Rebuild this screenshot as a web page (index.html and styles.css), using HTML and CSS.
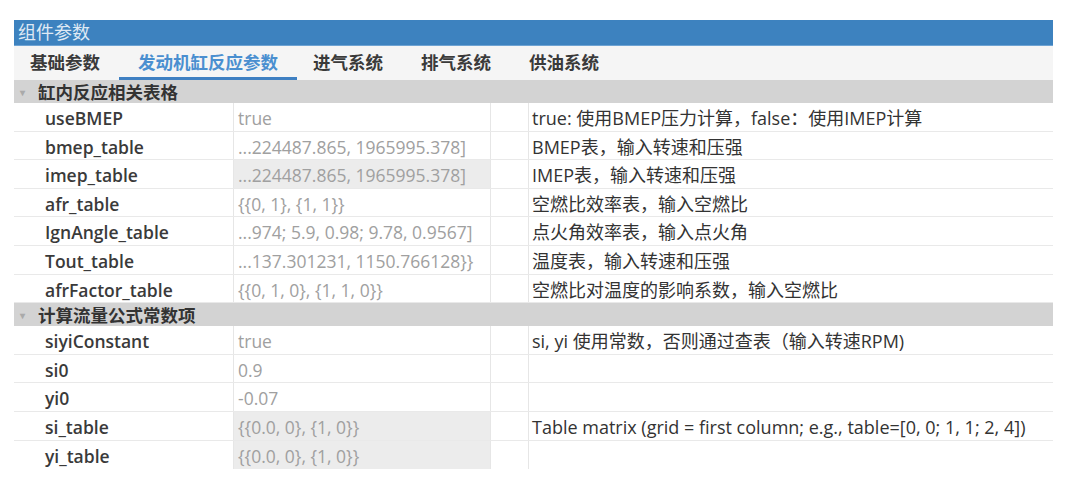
FILE: index.html
```html
<!doctype html>
<html>
	<head>
		<title>组件参数</title>
		<meta charset="utf-8"/>
		<link rel="stylesheet" href="styles.css">
	</head>
	<body>
		<div class="panel">
			<div class="titleBar">组件参数</div>
			<div class="tabs">
				<div class="tab">基础参数</div>
				<div class="tab active">发动机缸反应参数</div>
				<div class="tab">进气系统</div>
				<div class="tab">排气系统</div>
				<div class="tab">供油系统</div>
			</div>

			<div class="group"><span class="arrow">&#9662;</span>缸内反应相关表格</div>
			<div class="row"><div class="name">useBMEP</div><div class="value">true</div><div class="gap"></div><div class="desc">true: 使用BMEP压力计算，false：使用IMEP计算</div></div>
			<div class="row"><div class="name">bmep_table</div><div class="value">...224487.865, 1965995.378]</div><div class="gap"></div><div class="desc">BMEP表，输入转速和压强</div></div>
			<div class="row"><div class="name">imep_table</div><div class="value shade">...224487.865, 1965995.378]</div><div class="gap"></div><div class="desc">IMEP表，输入转速和压强</div></div>
			<div class="row"><div class="name">afr_table</div><div class="value">{{0, 1}, {1, 1}}</div><div class="gap"></div><div class="desc">空燃比效率表，输入空燃比</div></div>
			<div class="row"><div class="name">IgnAngle_table</div><div class="value">...974; 5.9, 0.98; 9.78, 0.9567]</div><div class="gap"></div><div class="desc">点火角效率表，输入点火角</div></div>
			<div class="row"><div class="name">Tout_table</div><div class="value">...137.301231, 1150.766128}}</div><div class="gap"></div><div class="desc">温度表，输入转速和压强</div></div>
			<div class="row"><div class="name">afrFactor_table</div><div class="value">{{0, 1, 0}, {1, 1, 0}}</div><div class="gap"></div><div class="desc">空燃比对温度的影响系数，输入空燃比</div></div>

			<div class="group"><span class="arrow">&#9662;</span>计算流量公式常数项</div>
			<div class="row"><div class="name">siyiConstant</div><div class="value">true</div><div class="gap"></div><div class="desc">si, yi 使用常数，否则通过查表（输入转速RPM)</div></div>
			<div class="row"><div class="name">si0</div><div class="value">0.9</div><div class="gap"></div><div class="desc"></div></div>
			<div class="row"><div class="name">yi0</div><div class="value">-0.07</div><div class="gap"></div><div class="desc"></div></div>
			<div class="row"><div class="name">si_table</div><div class="value shade">{{0.0, 0}, {1, 0}}</div><div class="gap"></div><div class="desc">Table matrix (grid = first column; e.g., table=[0, 0; 1, 1; 2, 4])</div></div>
			<div class="row last"><div class="name">yi_table</div><div class="value shade">{{0.0, 0}, {1, 0}}</div><div class="gap"></div><div class="desc"></div></div>
		</div>
	</body>
</html>
```

FILE: styles.css
```css
*{
	padding:0;margin:0;
	box-sizing:border-box;
}

body{
	background:#fff;
	font-family:"Open Sans","Noto Sans CJK SC",sans-serif;
	font-size:17px;
	color:#333;
}

.panel{
	width:1039px;
	margin:20px 0 0 14px;
}

.titleBar{
	height:26px;
	background-color:#3d82bf;
	border-bottom:1px solid #6ea3d3;
	color:#dfe9f4;
	font-size:18px;
	line-height:25px;
	padding-left:4px;
}

.tabs{
	height:34px;
	background-color:#f5f5f5;
	display:flex;
	padding-left:2px;
}

.tab{
	padding:0 19px;
	line-height:32px;
	font-size:17.5px;
	font-weight:bold;
	color:#3a3a3a;
	border-bottom:3px solid transparent;
}
.tab:first-child{
	padding-left:14px;
}
.tab.active{
	color:#4a8fd0;
	border-bottom-color:#3f80c2;
}
.tab.active + .tab{
	padding-left:16px;
}

.group{
	height:23px;
	background-color:#d3d3d3;
	line-height:22px;
	font-size:17.5px;
	font-weight:bold;
	color:#333;
	display:flex;
	align-items:center;
}
.arrow{
	font-size:10px;
	color:#aaa;
	width:24px;
	padding-left:6px;
}

.row{
	display:grid;
	grid-template-columns:219px 257px 38px 1fr;
	height:28.6px;
	border-bottom:1px solid #e9e9e9;
	background:#fff;
}
.row.last{
	border-bottom:none;
}
.row > div{
	line-height:30px;
	white-space:nowrap;
	overflow:hidden;
}

.name{
	padding-left:31px;
	font-size:17.5px;
	font-weight:600;
	color:#3a3a3a;
}
.value{
	border-left:1px solid #e6e6e6;
	padding-left:4px;
	color:#a0a0a0;
	font-size:17.5px;
}
.value.shade{
	background-color:#ececec;
}
.gap{
	border-left:1px solid #e6e6e6;
}
.desc{
	border-left:1px solid #e6e6e6;
	padding-left:3px;
	color:#333;
	font-size:18px;
}
```
